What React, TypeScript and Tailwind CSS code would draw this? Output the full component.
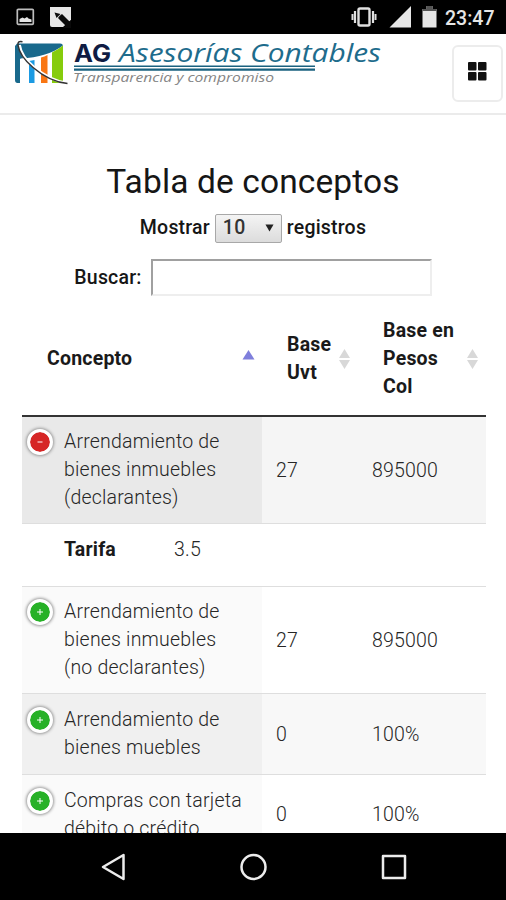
import React from 'react'
import clsx from 'clsx'

interface Concept {
  lines: string[]
  uvt: string
  pesos: string
  tarifa?: string
  height: string
  cell: string
  row: string
}

const concepts: Concept[] = [
  {
    lines: ['Arrendamiento de', 'bienes inmuebles', '(declarantes)'],
    uvt: '27',
    pesos: '895000',
    tarifa: '3.5',
    height: 'h-[107px] pt-[11px]',
    cell: 'bg-[#e9e9e9]',
    row: 'bg-[#f5f5f5]',
  },
  {
    lines: ['Arrendamiento de', 'bienes inmuebles', '(no declarantes)'],
    uvt: '27',
    pesos: '895000',
    height: 'h-[107px] pt-[11px]',
    cell: 'bg-[#fafafa]',
    row: 'bg-white',
  },
  {
    lines: ['Arrendamiento de', 'bienes muebles'],
    uvt: '0',
    pesos: '100%',
    height: 'h-[81px] pt-[12px]',
    cell: 'bg-[#f0f0f0]',
    row: 'bg-[#f8f8f8]',
  },
  {
    lines: ['Compras con tarjeta', 'débito o crédito'],
    uvt: '0',
    pesos: '100%',
    height: 'h-[79px] pt-[12px]',
    cell: 'bg-[#fafafa]',
    row: 'bg-white',
  },
]

function StatusBar() {
  return (
    <div className="flex h-[34px] shrink-0 items-center bg-black text-[#e6e6e6]">
      <svg className="ml-[16px]" width="19" height="18" viewBox="0 0 19 18">
        <rect x="1.3" y="1.3" width="16" height="15" rx="1" fill="none" stroke="#bdbdbd" strokeWidth="1.7" />
        <path d="M3.5 14v-3l3-1.5 2 1 2.5-1.500 1.500 1.500 3 1V14z" fill="#e6e6e6" />
      </svg>
      <svg className="ml-[14px]" width="22" height="22" viewBox="0 0 22 22">
        <path d="M1 1h21v13l-8 7H3q-2 0-2-2z" fill="#e6e6e6" />
        <path d="M5.500 6.500l6 1.500-4 4zM10.500 10l2.500-2 8 8v2l-3 3-9-9z" fill="#0a0a0a" />
        <path d="M22 14v8h-8z" fill="#0a0a0a" />
      </svg>
      <div className="ml-auto flex items-center">
        <svg width="28" height="22" viewBox="0 0 28 22">
          <rect x="8.500" y="2.500" width="11" height="17" rx="1.500" fill="none" stroke="#e0e0e0" strokeWidth="2.400" />
          <path d="M5 5v12M23 5v12" stroke="#e0e0e0" strokeWidth="2.200" />
          <path d="M2.500 8v6M25.500 8v6" stroke="#e0e0e0" strokeWidth="2" />
        </svg>
        <svg className="ml-[11px]" width="23" height="22" viewBox="0 0 23 22">
          <path d="M22 0v21.500H.5z" fill="#e6e6e6" />
        </svg>
        <svg className="ml-[10px]" width="15" height="22" viewBox="0 0 15 22">
          <path d="M4.500 0h6v3h4v18.500h-14V3h4z" fill="#e6e6e6" />
          <path d="M4.500 0h6v3h4v2H.5V3h4z" fill="#555" />
        </svg>
        <span className="mt-[3px] ml-[8px] mr-[12px] w-[49px] text-[19.500px] font-medium">23:47</span>
      </div>
    </div>
  )
}

function Logo() {
  return (
    <svg width="375" height="50" viewBox="0 0 375 50" className="ml-[10px] mt-[3px] shrink-0 overflow-visible">
      <path d="M7 6.500h43q3 0 3 3V13Q30 22 10 22v24H7.500Q5 46 5 43V9z" fill="#19698c" />
      <path d="M10.500 21.500Q38 20 53 8.500V46H10.500z" fill="#fff" />
      <path d="M19 24q3-.3 5.500-1v23H19z" fill="#1b9ae2" />
      <path d="M31 20.500q3.500-1 6.500-2.500v28H31z" fill="#f97613" />
      <path d="M42 15.500q6-3 11-7V43q0 3-3 3h-8z" fill="#86cc0c" />
      <path d="M9.500 8Q11 20 25 31q15 12 31 15" fill="none" stroke="#fff" strokeWidth="2.800" />
      <path d="M12.500 4.800Q7.500 3.500 8 8 9.500 19 23 30.500 40 45 57.500 46.500" fill="none" stroke="#333" strokeWidth="1.500" />
      <text x="64" y="24.500" fontFamily="Inter, sans-serif" fontSize="24.500" fontWeight="700" fill="#0f1c43" textLength="37" lengthAdjust="spacingAndGlyphs">AG</text>
      <text x="109" y="24.500" fontFamily="Open Sans, sans-serif" fontSize="25" fontStyle="italic" fill="#1e6c8c" textLength="262" lengthAdjust="spacingAndGlyphs">Asesorías Contables</text>
      <text x="63" y="44.500" fontFamily="Open Sans, sans-serif" fontSize="13.500" fontStyle="italic" fill="#858585" textLength="201" lengthAdjust="spacingAndGlyphs">Transparencia y compromiso</text>
      <path d="M64 29.300h241" stroke="#19617f" strokeWidth="1.600" />
      <path d="M64 32.600h241" stroke="#19617f" strokeWidth="2.400" />
    </svg>
  )
}

function SortArrows() {
  return (
    <svg width="13" height="20" viewBox="0 0 13 20" className="shrink-0">
      <path d="M6.500 0L12 9H1zM6.500 20L12 11H1z" fill="#d8d8d8" />
    </svg>
  )
}

function Toggle({ open }: { open: boolean }) {
  return (
    <span
      className={clsx(
        'ml-[5px] mt-[1px] flex size-[26px] shrink-0 items-center justify-center rounded-full border-3 border-white shadow-[0_0_3px_1px_#999]',
        open ? 'bg-[#d62626]' : 'bg-[#27b127]',
        '[background-clip:padding-box]'
      )}
    >
      <svg width="8" height="8" viewBox="0 0 8 8">
        <path d={open ? 'M1.500 4h5' : 'M1 4h6M4 1v6'} stroke="#fff" strokeWidth="1" />
      </svg>
    </span>
  )
}

function ConceptRow({ item }: { item: Concept }) {
  return (
    <>
      <div className={clsx('flex shrink-0', item.row)}>
        <div className={clsx('flex w-[240px] border-b border-[#dedede]', item.cell, item.height)}>
          <Toggle open={!!item.tarifa} />
          <div className="ml-[11px] whitespace-nowrap">
            {item.lines.map((line) => (
              <div key={line} className="h-7">{line}</div>
            ))}
          </div>
        </div>
        <div className="flex flex-1 items-center border-b border-[#dedede] pt-px">
          <div className="w-[95px] pl-[14px]">{item.uvt}</div>
          <div className="pl-[15px]">{item.pesos}</div>
        </div>
      </div>
      {item.tarifa && (
        <div className="flex h-[63px] shrink-0 border-b border-[#dedede] pt-[12px] pl-[42px]">
          <span className="w-[110px] font-bold text-[#1a1a1a]">Tarifa</span>
          <span>{item.tarifa}</span>
        </div>
      )}
    </>
  )
}

function AndroidNav() {
  return (
    <div className="flex h-[67px] shrink-0 items-center justify-between bg-black pr-[98px] pl-[100px]">
      <svg width="28" height="28" viewBox="0 0 28 28" fill="none" stroke="#ececec" strokeWidth="2.500" strokeLinejoin="round">
        <path d="M23.500 2v24L3 14z" />
      </svg>
      <svg width="28" height="28" viewBox="0 0 28 28" fill="none" stroke="#ececec" strokeWidth="2.500">
        <circle cx="13.500" cy="14" r="12" />
      </svg>
      <svg width="28" height="28" viewBox="0 0 28 28" fill="none" stroke="#ececec" strokeWidth="2.500" strokeLinejoin="round">
        <rect x="3" y="3" width="22" height="22" />
      </svg>
    </div>
  )
}

export default function App() {
  return (
    <div className="flex h-[900px] w-[506px] flex-col overflow-hidden bg-white font-[Roboto,sans-serif] text-[19.500px] leading-7 text-[#262626]">
      <StatusBar />
      <header className="flex h-[81px] shrink-0 border-b-2 border-[#ebebeb]">
        <Logo />
        <button className="mt-[11px] ml-auto mr-[3px] flex h-[57px] w-[51px] items-center justify-center rounded-md border-2 border-[#ececec]">
          <svg width="20" height="20" viewBox="0 0 20 20" fill="#111" className="-mt-[5px] -ml-[2px]">
            <rect x="1" y="1" width="8.500" height="8.500" rx="1" />
            <rect x="11" y="1" width="8.500" height="8.500" rx="1" />
            <rect x="1" y="11" width="8.500" height="8.500" rx="1" />
            <rect x="11" y="11" width="8.500" height="8.500" rx="1" />
          </svg>
        </button>
      </header>
      <main className="flex min-h-0 flex-1 flex-col overflow-hidden tracking-[0.2px]">
        <h1 className="mt-[47px] h-10 shrink-0 text-center text-[33.500px] leading-10 tracking-[0.12px] text-[#161616]">Tabla de conceptos</h1>
        <div className="mt-[11px] flex h-[30px] shrink-0 items-center justify-center font-medium text-[#161616]">
          <span>Mostrar</span>
          <span className="mx-[5px] flex h-[29px] w-[67px] items-center rounded-[2px] border border-[#a8a8a8] bg-linear-to-b from-[#f4f4f4] to-[#dcdcdc] pl-[7px] text-[#333]">
            10
            <svg width="9" height="10" viewBox="0 0 10 10" className="ml-auto mr-[7px]">
              <path d="M.5 1h9L5 9z" fill="#222" />
            </svg>
          </span>
          <span>registros</span>
        </div>
        <div className="mt-[16px] flex h-[37px] shrink-0 items-center justify-center font-medium text-[#161616]">
          <span>Buscar:</span>
          <span className="ml-[9px] h-[37px] w-[281px] border-2 border-t-[#a0a0a0] border-r-[#eee] border-b-[#eee] border-l-[#a0a0a0] bg-white" />
        </div>
        <div className="mr-[20px] ml-[22px] flex flex-col font-light">
          <div className="flex h-[121px] shrink-0 items-center border-b-2 border-[#333] pt-[6px] font-bold text-[#1a1a1a]">
            <div className="flex w-[240px] items-center pl-[25px]">
              Concepto
              <svg width="13" height="10" viewBox="0 0 13 10" className="-mt-[8px] ml-auto mr-[7px]">
                <path d="M6.500 0L12.500 9.500H.5z" fill="#7f7fdc" />
              </svg>
            </div>
            <div className="flex w-[96px] items-center justify-between pl-[25px] pr-[7px]">
              <div className="w-11">Base Uvt</div>
              <SortArrows />
            </div>
            <div className="flex flex-1 items-center justify-between pl-[25px] pr-[7px]">
              <div className="w-[76px]">Base en Pesos Col</div>
              <SortArrows />
            </div>
          </div>
          {concepts.map((item) => (
            <ConceptRow key={item.lines.join(' ')} item={item} />
          ))}
        </div>
      </main>
      <AndroidNav />
    </div>
  )
}
